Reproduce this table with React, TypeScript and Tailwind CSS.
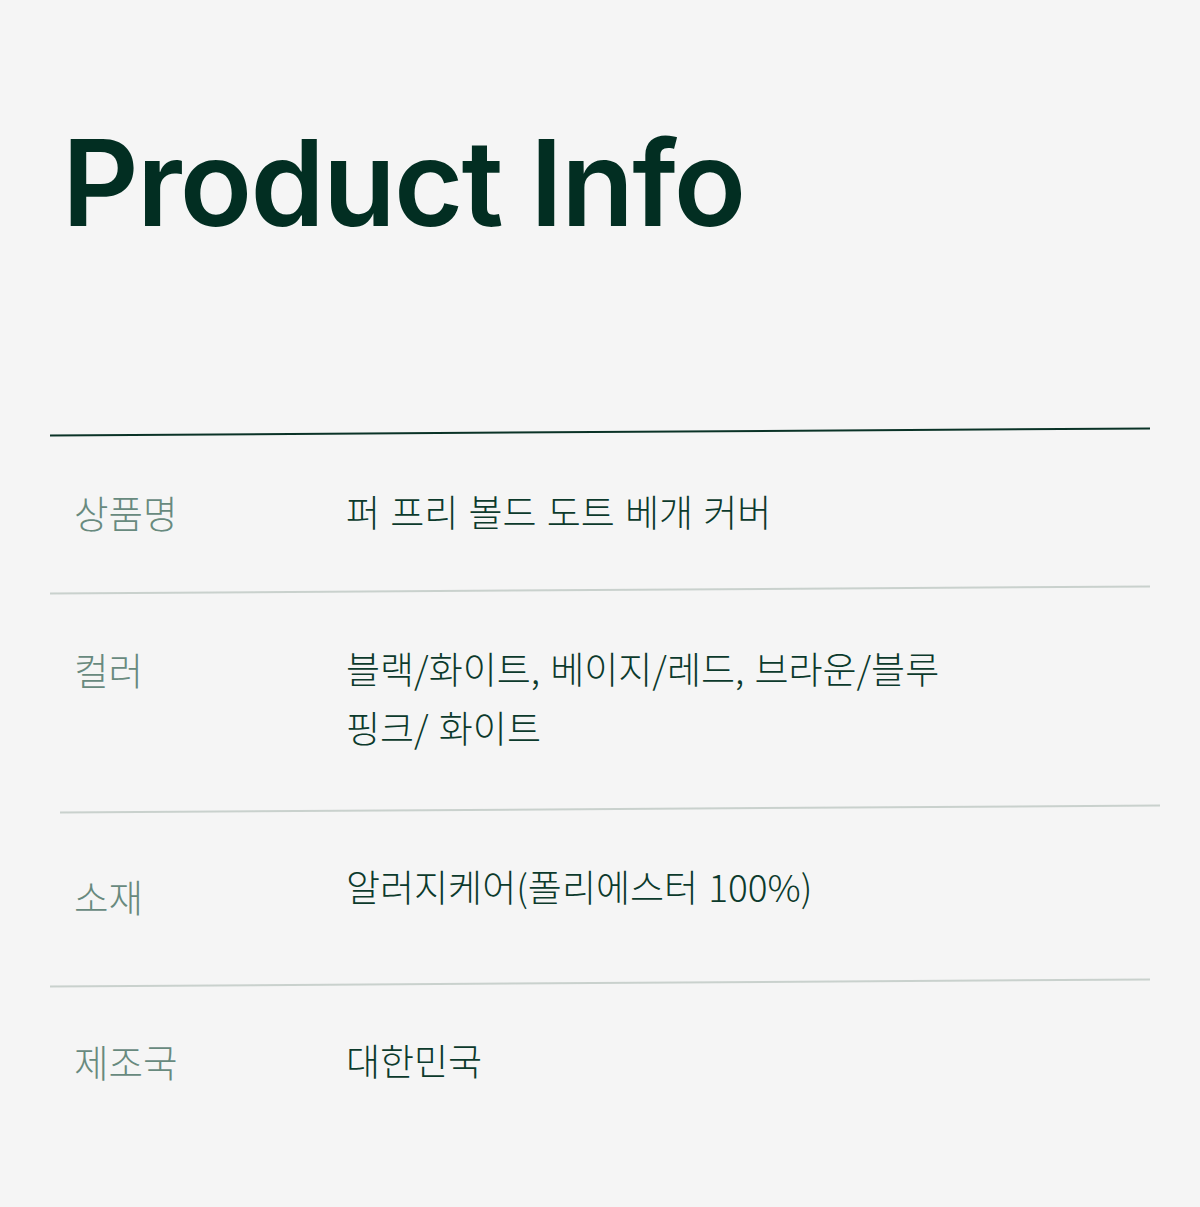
type Row = { label: string; lines: string[]; labelOffset?: string; pad: string }

const rows: Row[] = [
  { label: '상품명', lines: ['퍼 프리 볼드 도트 베개 커버'], pad: 'pt-[49px] pb-[48px]' },
  {
    label: '컬러',
    lines: ['블랙/화이트, 베이지/레드, 브라운/블루', '핑크/ 화이트'],
    pad: 'pt-[48px] pb-[51px]',
  },
  {
    label: '소재',
    lines: ['알러지케어(폴리에스터 100%)'],
    labelOffset: 'pt-[9px]',
    pad: 'pt-[48px] pb-[57px]',
  },
  { label: '제조국', lines: ['대한민국'], pad: 'pt-[47px] pb-[63px]' },
]

function Divider({ dark, shift }: { dark?: boolean; shift?: boolean }) {
  return (
    <div
      className={`w-[1100px] -rotate-[0.365deg] ${shift ? 'ml-[10px]' : ''} ${
        dark ? 'h-[2px] bg-[#0a3327]' : 'h-[1.5px] bg-[#c9d1cd]'
      }`}
    />
  )
}

export default function App() {
  return (
    <div className="min-h-[1207px] w-[1200px] bg-[#f5f5f5] px-[50px] pt-[124px] font-['Noto_Sans_CJK_KR',sans-serif]">
      <h1 className="ml-[12px] font-['Inter','Noto_Sans',sans-serif] text-[119px] font-semibold leading-none tracking-[-0.015em] text-[#022e22]">
        Product Info
      </h1>

      <div className="mt-[188px]">
        <Divider dark />
        {rows.map((r, i) => (
          <div key={r.label}>
            <div className={`flex ${r.pad}`}>
              <div className={`w-[296px] pl-[24px] text-[37.5px] font-light leading-[59px] text-[#688a7e] ${r.labelOffset ?? ''}`}>
                {r.label}
              </div>
              <div className="text-[37px] font-light leading-[59px] text-[#0c3a2c] [word-spacing:2px]">
                {r.lines.map((l) => (
                  <div key={l}>{l}</div>
                ))}
              </div>
            </div>
            {i < rows.length - 1 && <Divider shift={i === 1} />}
          </div>
        ))}
      </div>
    </div>
  )
}
